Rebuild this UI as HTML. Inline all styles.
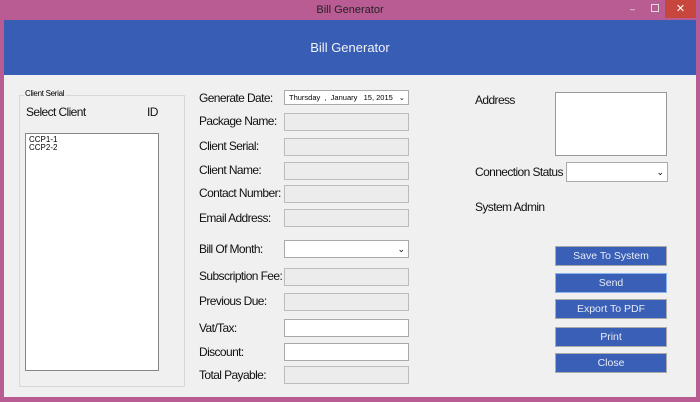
<!DOCTYPE html><html><head><style>
body{margin:0;width:700px;height:402px;background:#b95c94;position:relative;overflow:hidden;font-family:"Liberation Sans",sans-serif;}
.a{position:absolute}
.t{font-size:12px;color:#111;letter-spacing:-0.6px;white-space:nowrap}
.f{position:absolute;left:284px;width:123px;border:1px solid #bcbcbc;background:#ececec;height:16px}
.w{background:#fff;border-color:#a9a9a9}
.b{position:absolute;left:555px;width:110px;height:18px;background:#3a5fb6;border:1px solid #aaa;color:#e8ecf6;font-size:10.5px;text-align:center;line-height:18px}
</style></head><body>
<div class="a" style="left:0;top:0;width:700px;height:20px;color:#222;font-size:11px;text-align:center;line-height:20px">Bill Generator</div>
<div class="a" style="left:630px;top:4px;font-size:9px;color:#eee">–</div>
<div class="a" style="left:651px;top:4px;width:6px;height:6px;border:1px solid #ddd"></div>
<div class="a" style="left:665px;top:0;width:31px;height:18px;background:#c7463d;color:#fff;font-size:11px;text-align:center;line-height:18px">✕</div>
<div class="a" style="left:4px;top:20px;width:692px;height:377px;background:#f0f0f0"></div>
<div class="a" style="left:4px;top:20px;width:692px;height:55px;background:#375db5;color:#f0f2f8;font-size:13px;text-align:center;line-height:55px">Bill Generator</div>
<div class="a" style="left:19px;top:95px;width:164px;height:290px;border:1px solid #d8d8d8"></div>
<div class="a" style="left:24px;top:89px;font-size:8px;background:#f0f0f0;padding:0 1px;letter-spacing:-0.3px">Client Serial</div>
<div class="a t" style="left:26px;top:105px">Select Client</div>
<div class="a t" style="left:147px;top:105px">ID</div>
<div class="a" style="left:25px;top:133px;width:134px;height:238px;background:#fff;border:1px solid #888;font-size:8px;line-height:8px;padding:2px 0 0 3px;box-sizing:border-box">CCP1-1<br>CCP2-2</div>
<div class="a t" style="left:199px;top:91px">Generate Date:</div>
<div class="f w" style="top:90px;height:13px;font-size:7.5px;line-height:13px;padding-left:4px;width:119px">Thursday &nbsp;, &nbsp;January &nbsp;&nbsp;15, 2015<span style="position:absolute;right:3px">⌄</span></div>
<div class="a t" style="left:199px;top:114px">Package Name:</div><div class="f" style="top:113px"></div>
<div class="a t" style="left:199px;top:139px">Client Serial:</div><div class="f" style="top:138px"></div>
<div class="a t" style="left:199px;top:163px">Client Name:</div><div class="f" style="top:162px"></div>
<div class="a t" style="left:199px;top:186px">Contact Number:</div><div class="f" style="top:185px"></div>
<div class="a t" style="left:199px;top:211px">Email Address:</div><div class="f" style="top:209px"></div>
<div class="a t" style="left:199px;top:242px">Bill Of Month:</div><div class="f w" style="top:240px;font-size:9px;text-align:right;line-height:16px"><span style="padding-right:3px">⌄</span></div>
<div class="a t" style="left:199px;top:269px">Subscription Fee:</div><div class="f" style="top:268px"></div>
<div class="a t" style="left:199px;top:294px">Previous Due:</div><div class="f" style="top:293px"></div>
<div class="a t" style="left:199px;top:321px">Vat/Tax:</div><div class="f w" style="top:319px"></div>
<div class="a t" style="left:199px;top:345px">Discount:</div><div class="f w" style="top:343px"></div>
<div class="a t" style="left:199px;top:368px">Total Payable:</div><div class="f" style="top:366px"></div>
<div class="a t" style="left:475px;top:93px">Address</div>
<div class="a" style="left:555px;top:92px;width:110px;height:62px;background:#fff;border:1px solid #999"></div>
<div class="a t" style="left:475px;top:165px">Connection Status</div>
<div class="a" style="left:566px;top:162px;width:100px;height:18px;background:#fff;border:1px solid #aaa;font-size:9px;text-align:right;line-height:18px"><span style="padding-right:3px">⌄</span></div>
<div class="a t" style="left:475px;top:200px">System Admin</div>
<div class="b" style="top:246px">Save To System</div>
<div class="b" style="top:273px;border-color:#8ab4f0">Send</div>
<div class="b" style="top:299px">Export To PDF</div>
<div class="b" style="top:327px">Print</div>
<div class="b" style="top:353px">Close</div>
</body></html>
